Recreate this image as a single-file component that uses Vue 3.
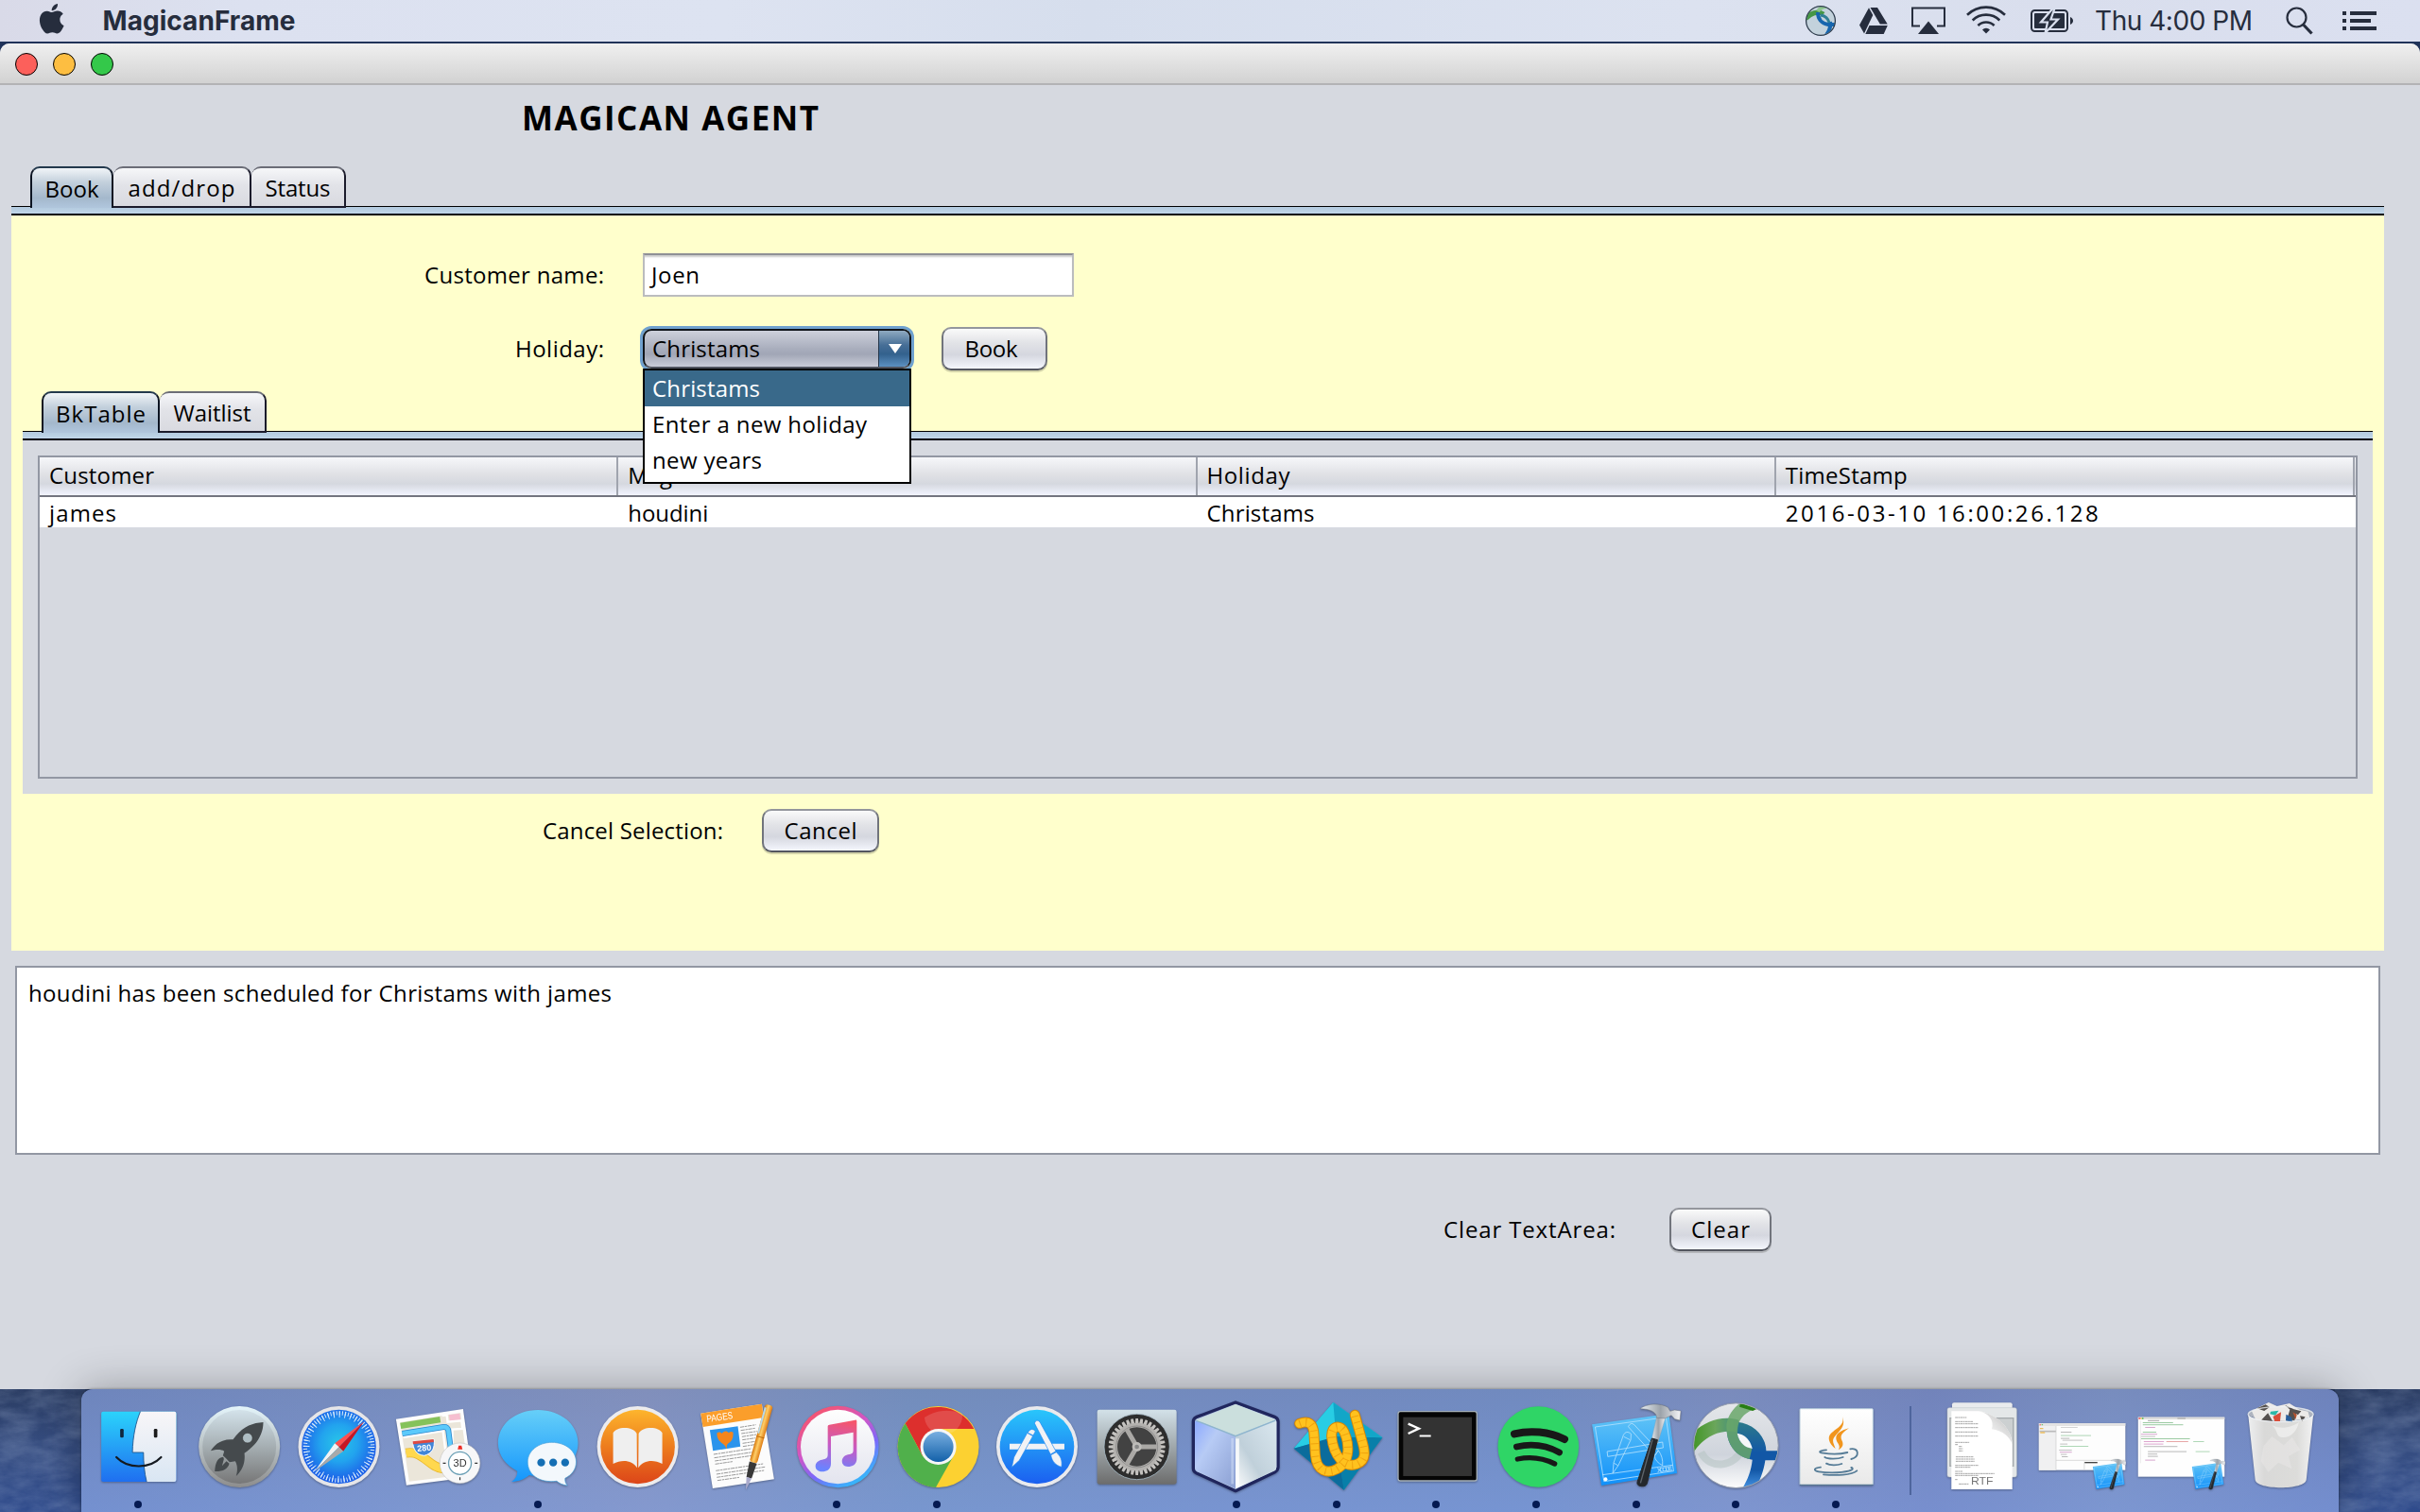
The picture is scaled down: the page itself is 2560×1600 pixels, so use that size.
<script setup>
// Spreads the letters of a label so that it takes the given width in pixels.
const vFit = {
  mounted(el, { value }) {
    const n = el.textContent.length
    const spacing = (value - el.getBoundingClientRect().width) / (n - 1)
    el.style.letterSpacing = `${spacing}px`
    el.style.marginRight = `${-spacing}px`
  },
}

const mainTabs = [
  { label: 'Book', fit: 57, width: 88, on: true },
  { label: 'add/drop', fit: 113, width: 146 },
  { label: 'Status', fit: 69, width: 100 },
]
const innerTabs = [
  { label: 'BkTable', fit: 95, width: 125, on: true },
  { label: 'Waitlist', fit: 82, width: 113 },
]
const holidays = [
  { label: 'Christams', fit: 114, on: true },
  { label: 'Enter a new holiday', fit: 227 },
  { label: 'new years', fit: 116 },
]
const columns = [
  { head: 'Customer', headFit: 111, cell: 'james', cellFit: 71 },
  { head: 'Magican', headFit: 90, cell: 'houdini', cellFit: 85 },
  { head: 'Holiday', headFit: 88, cell: 'Christams', cellFit: 114 },
  { head: 'TimeStamp', headFit: 129, cell: '2016-03-10 16:00:26.128', cellFit: 331 },
]
const gearTeeth = Array.from({ length: 36 }, (_, i) => i * 10)
const codeLines = [
  [745, 196, 90, '#3a9a4a'], [745, 203, 120, '#3a9a4a'], [752, 211, 30, '#b050a0'], [745, 226, 40, '#3a9a4a'],
  [740, 233, 48, '#b050a0'], [740, 240, 42, '#888'], [740, 247, 145, '#3a9a4a'], [748, 256, 60, '#c050a0'],
  [815, 256, 65, '#d05050'], [895, 256, 32, '#60b070'], [748, 264, 58, '#c050a0'], [748, 272, 100, '#777'],
  [760, 288, 115, '#777'], [902, 288, 42, '#60b070'], [760, 296, 28, '#777'], [760, 303, 30, '#777'], [752, 315, 30, '#b050a0'],
]
const editorLines = [
  [505, 211, 50, '#aaa'], [505, 226, 32, '#777'], [505, 237, 90, '#60b070'], [505, 246, 26, '#777'], [510, 252, 60, '#888'],
  [503, 264, 22, '#888'], [503, 271, 84, '#60b070'], [500, 283, 38, '#888'], [502, 290, 36, '#b050a0'], [505, 297, 18, '#888'],
  [508, 304, 18, '#777'],
]
</script>

<template>
  <div class="desktop">
    <svg class="wallpaper" width="2560" height="1600">
      <filter id="grain" x="0" y="0" width="100%" height="100%">
        <feTurbulence type="fractalNoise" baseFrequency=".03 .07" numOctaves="5" seed="4" />
        <feColorMatrix values="0 0 0 0 .45  0 0 0 0 .55  0 0 0 0 .75  1.1 0 0 0 -.3" />
      </filter>
      <rect y="1468" width="90" height="132" filter="url(#grain)" opacity=".4" />
      <rect x="2470" y="1468" width="90" height="132" filter="url(#grain)" opacity=".4" />
    </svg>

    <header class="menubar">
      <svg class="apple" viewBox="0 0 24 24"><path fill="#262d3d" d="M12.152 6.896c-.948 0-2.415-1.078-3.96-1.04-2.04.027-3.91 1.183-4.961 3.014-2.117 3.675-.546 9.103 1.519 12.09 1.013 1.454 2.208 3.09 3.792 3.039 1.52-.065 2.09-.987 3.935-.987 1.831 0 2.35.987 3.96.948 1.637-.026 2.676-1.48 3.676-2.948 1.156-1.688 1.636-3.325 1.662-3.415-.039-.013-3.182-1.221-3.22-4.857-.026-3.04 2.48-4.494 2.597-4.559-1.429-2.09-3.623-2.324-4.39-2.376-2-.156-3.675 1.09-4.61 1.09zM15.53 3.83c.843-1.012 1.4-2.427 1.245-3.83-1.207.052-2.662.805-3.532 1.818-.78.896-1.454 2.338-1.273 3.714 1.338.104 2.715-.688 3.559-1.701" /></svg>
      <b v-fit="204">MagicanFrame</b>
      <div class="status">
        <svg width="34" height="34" viewBox="0 0 34 34">
          <defs><clipPath id="ball"><circle cx="17" cy="17" r="15" /></clipPath></defs>
          <circle cx="17" cy="17" r="15" fill="#c3d2dc" />
          <g clip-path="url(#ball)" fill="none">
            <path d="M1 15C6 9 14 6 20 10" stroke="#469746" stroke-width="5" />
            <path d="M14 7c2-3 5-5 9-5" stroke="#8cc58c" stroke-width="4" />
            <path d="M14 8c0 7 4 12 11 13h8M27 18c1 6-1 10-4 14" stroke="#1766ae" stroke-width="4" />
            <path d="M17 11c6 1 8 4 9 8" stroke="#2f7f95" stroke-width="3" />
          </g>
          <circle cx="17" cy="17" r="15.4" fill="none" stroke="#2d3c4c" stroke-width="1.3" />
        </svg>
        <svg class="drive" width="30" height="28" viewBox="0 0 30 28" fill="#262d3d">
          <path d="M10 .2 14.3 8 5 27.600 0 18.500ZM11.500 0h7.500l10.700 17.500h-7.900ZM10.500 19h19.300L25.700 28H6.300Z" />
        </svg>
        <svg class="airplay" width="36" height="30" viewBox="0 0 36 30">
          <path d="M9 20.500H1V1.500h34v19h-8" fill="none" stroke="#262d3d" stroke-width="2" /><path d="M18 15.500 29 29H7Z" fill="#262d3d" />
        </svg>
        <svg class="wifi" width="42" height="30" viewBox="0 0 42 30" fill="none" stroke="#262d3d" stroke-width="2.600">
          <path d="M1 9.800a28.500 28.500 0 0 1 40 0M6.700 15.500a20.400 20.400 0 0 1 28.600 0M12.400 21a12.200 12.200 0 0 1 17.200 0" />
          <path d="M21 29.500l-4-4a5.700 5.700 0 0 1 8 0Z" fill="#262d3d" stroke="none" />
        </svg>
        <svg class="battery" width="46" height="26" viewBox="0 0 46 26">
          <rect x="1" y="2" width="38" height="22" rx="3.500" fill="none" stroke="#262d3d" stroke-width="2" />
          <rect x="4" y="5" width="32" height="16" rx="1" fill="#262d3d" />
          <path d="M42 9c4 1.500 4 6.500 0 8Z" fill="#262d3d" />
          <path d="M23.500 0 11 14.500h7L15.500 26 29 11.500h-7.500L25.500 0Z" fill="#262d3d" stroke="#dae0ef" stroke-width="2.200" />
        </svg>
        <span class="clock" v-fit="167">Thu 4:00 PM</span>
        <svg class="search" width="29" height="30" viewBox="0 0 29 30" fill="none" stroke="#262d3d">
          <circle cx="11.500" cy="11.500" r="10" stroke-width="2.200" /><path d="m18.500 19 9 9.500" stroke-width="3.200" />
        </svg>
        <svg class="list" width="36" height="20" viewBox="0 0 36 20" fill="#262d3d">
          <path d="M0 0h4v4H0ZM8 0h28v4H8ZM0 8h4v4H0ZM8 8h22v4H8ZM0 16h4v4H0ZM8 16h28v4H8Z" />
        </svg>
      </div>
    </header>

    <section class="window">
      <div class="titlebar"><i class="red" /><i class="amber" /><i class="green" /></div>
      <h1><span v-fit="314">MAGICAN AGENT</span></h1>

      <div class="pane">
        <nav class="tabs">
          <div v-for="t in mainTabs" :key="t.label" class="tab" :class="{ on: t.on }" :style="{ width: t.width + 'px' }">
            <span v-fit="t.fit">{{ t.label }}</span>
          </div>
        </nav>
        <div class="rail" />
        <main class="booking">
          <div class="row">
            <label><span v-fit="190">Customer name:</span></label>
            <div class="field"><span v-fit="51">Joen</span></div>
          </div>
          <div class="row second">
            <label><span v-fit="94">Holiday:</span></label>
            <div class="combo">
              <div class="value"><span v-fit="114">Christams</span></div>
              <div class="arrow"><svg width="14" height="10" viewBox="0 0 14 10"><path d="M0 0h14L7 10Z" fill="#fff" /></svg></div>
              <ul class="popup">
                <li v-for="h in holidays" :key="h.label" :class="{ on: h.on }"><span v-fit="h.fit">{{ h.label }}</span></li>
              </ul>
            </div>
            <button class="book"><span v-fit="56">Book</span></button>
          </div>

          <div class="inner">
            <nav class="tabs">
              <div v-for="t in innerTabs" :key="t.label" class="tab" :class="{ on: t.on }" :style="{ width: t.width + 'px' }">
                <span v-fit="t.fit">{{ t.label }}</span>
              </div>
            </nav>
            <div class="rail" />
            <div class="tablebox">
              <div class="table">
                <div class="head">
                  <div v-for="c in columns" :key="c.head"><span v-fit="c.headFit">{{ c.head }}</span></div>
                </div>
                <div class="record">
                  <div v-for="c in columns" :key="c.head"><span v-fit="c.cellFit">{{ c.cell }}</span></div>
                </div>
              </div>
            </div>
          </div>

          <div class="row cancelrow">
            <label><span v-fit="191">Cancel Selection:</span></label>
            <button class="cancel"><span v-fit="77">Cancel</span></button>
          </div>
        </main>
      </div>

      <div class="log"><span v-fit="617">houdini has been scheduled for Christams with james</span></div>
      <div class="row clearrow">
        <label><span v-fit="182">Clear TextArea:</span></label>
        <button class="clear"><span v-fit="62">Clear</span></button>
      </div>
    </section>

    <footer class="dock">
      <!-- Finder -->
      <div class="slot run"><svg viewBox="282.600 90 317 390">
        <defs>
          <linearGradient id="fb" x2="0" y2="1"><stop stop-color="#2bd3fb" /><stop offset="1" stop-color="#1f6ff0" /></linearGradient>
          <linearGradient id="fw" x2="0" y2="1"><stop stop-color="#f8f6f8" /><stop offset="1" stop-color="#d9e6f3" /></linearGradient>
        </defs>
        <rect x="322" y="161" width="238" height="223" rx="6" fill="url(#fb)" />
        <path d="M446 161c-14 34-24 78-25 130h35c0 34 3 64 10 93h88q6 0 6-6V167q0-6-6-6Z" fill="url(#fw)" />
        <path d="M446 161c-14 34-24 78-25 130h35c0 34 3 64 10 93" fill="none" stroke="#1b4f86" stroke-width="2.500" />
        <rect x="382" y="216" width="11" height="28" rx="4" fill="#10263c" /><rect x="489" y="216" width="11" height="28" rx="4" fill="#1b1b1b" />
        <path d="M370 306c36 38 106 38 142 0" fill="none" stroke="#14191f" stroke-width="6.500" stroke-linecap="round" />
      </svg></div>
      <!-- Launchpad -->
      <div class="slot"><svg viewBox="599.400 90 317 390">
        <defs>
          <linearGradient id="lp" x2="0" y2="1"><stop stop-color="#d3e2ea" /><stop offset=".5" stop-color="#a5aeb2" /><stop offset="1" stop-color="#777" /></linearGradient>
          <linearGradient id="lr" x2="0" y2="1"><stop stop-color="#e4f5fb" /><stop offset="1" stop-color="#8d8d8d" /></linearGradient>
        </defs>
        <circle cx="759" cy="273" r="129" fill="url(#lr)" /><circle cx="759" cy="273" r="117" fill="url(#lp)" />
        <path fill="#454a4d" d="M835 195c-38 2-70 17-96 55-30-2-54 9-71 36 19-5 32-5 43 1l-4 14 9 8 12 13 18-3c6 11 9 24 3 47 19-18 30-42 26-73 38-25 60-58 60-98Z" />
        <path fill="#454a4d" d="M708 305c-17 2-26 17-27 46 25 1 42-8 46-25l-9-7-14 15 6-22Z" /><circle cx="785" cy="245" r="16" fill="#aebdc3" stroke="#333" stroke-width="2" />
      </svg></div>
      <!-- Safari -->
      <div class="slot"><svg viewBox="916.500 90 317 390">
        <defs><radialGradient id="sf" cy=".45"><stop stop-color="#28c6e8" /><stop offset=".5" stop-color="#22a3ee" /><stop offset="1" stop-color="#1d62e8" /></radialGradient></defs>
        <circle cx="1077" cy="273" r="129" fill="#e5e5e8" /><circle cx="1077" cy="273" r="118" fill="url(#sf)" />
        <circle cx="1077" cy="273" r="107" fill="none" stroke="#d9ecfa" stroke-width="13" stroke-dasharray="3 6.340" />
        <circle cx="1077" cy="273" r="103" fill="none" stroke="#d9ecfa" stroke-width="20" stroke-dasharray="3 14.970" />
        <path d="M1157 193l-93 69 13 12Z" fill="#ff4f4f" /><path d="M1157 193l-66 94-14-13Z" fill="#c81522" />
        <path d="M1000 351l64-89 13 12Z" fill="#f3f3f3" /><path d="M1000 351l91-64-14-13Z" fill="#a9a9a9" />
      </svg></div>
      <!-- Maps -->
      <div class="slot"><svg viewBox="1233.300 90 317 390">
        <path d="M1257 185 1470 153 1500 368 1290 395Z" fill="#fdfdfd" />
        <path d="M1270 195 1462 165 1488 360 1299 383Z" fill="#ebe6da" />
        <path d="M1270 197 1396 177 1399 196 1273 216Z" fill="#85c25a" /><path d="M1425 172 1459 167 1462 188 1428 192Z" fill="#f6bfd0" />
        <path d="M1403 174 1418 172 1421 194 1465 190 1468 216 1436 218V270M1280 243 1406 222 1414 285" fill="none" stroke="#fff" stroke-width="7" />
        <path d="M1277 231 1408 210q12-1 15 10l8 60" fill="none" stroke="#2a87cf" stroke-width="18" /><path d="M1277 231 1408 210q12-1 15 10l8 60" fill="none" stroke="#5ccafb" stroke-width="13" />
        <path d="M1289 293c55-10 70 45 118 50" fill="none" stroke="#eab72c" stroke-width="30" /><path d="M1289 293c55-10 70 45 118 50" fill="none" stroke="#ffd84e" stroke-width="25" />
        <path d="M1310 256l68-7c3 29-6 45-31 52-27-2-36-22-37-45Z" fill="#4286d8" stroke="#fff" stroke-width="3" /><path d="M1310 256l66-7 1 9-66 7Z" fill="#df4a42" />
        <text x="1347" y="286" class="t" font-size="27" font-weight="700" fill="#fff" text-anchor="middle" transform="rotate(-5 1347 280)">280</text>
        <circle cx="1460" cy="325" r="64" fill="#f7f7f8" stroke="#bbb" stroke-width="1.500" /><circle cx="1460" cy="325" r="36" fill="#fff" stroke="#6a9fb5" stroke-width="4" />
        <text x="1460" y="336" class="t" font-size="33" fill="#333" text-anchor="middle">3D</text>
        <path d="M1453 281l3-12h9l3 12Z" fill="#ed2b24" /><path d="M1406 325h9M1507 325h9M1460 370v9" stroke="#333" stroke-width="3.500" />
      </svg></div>
      <!-- Messages -->
      <div class="slot run"><svg viewBox="50.400 90 317 390">
        <defs><linearGradient id="ms" x2="0" y2="1"><stop stop-color="#66cff8" /><stop offset="1" stop-color="#1596fc" /></linearGradient></defs>
        <path d="M207 156c72 0 127 46 127 105s-55 105-127 105c-9 0-20-1-28-3-15 13-32 20-56 21 13-10 19-20 18-34-36-19-61-49-61-89 0-59 55-105 127-105Z" fill="url(#ms)" />
        <path d="M251 259c43 0 77 27 77 62 0 24-14 41-35 52-1 9 1 15 7 23-16-2-26-7-34-14-57 7-92-22-92-61 0-35 34-62 77-62Z" fill="#f3f8fc" stroke="#3e9bd8" stroke-width="2" />
        <circle cx="217" cy="323" r="12.500" fill="#156fb4" /><circle cx="255" cy="323" r="12.500" fill="#156fb4" /><circle cx="293" cy="323" r="12.500" fill="#156fb4" />
      </svg></div>
      <!-- iBooks -->
      <div class="slot"><svg viewBox="367.200 90 317 390">
        <defs><linearGradient id="ib" x2="0" y2="1"><stop stop-color="#fdb52d" /><stop offset=".5" stop-color="#ed7c1d" /><stop offset="1" stop-color="#dc4519" /></linearGradient></defs>
        <circle cx="525" cy="273" r="129" fill="#ececee" /><circle cx="525" cy="273" r="118" fill="url(#ib)" />
        <path fill="#efefef" d="M523 340c-16-25-48-27-76-13V229c8-20 62-24 75 2ZM527 340c16-25 48-27 76-13V229c-8-20-62-24-75 2Z" />
      </svg></div>
      <!-- Pages -->
      <div class="slot"><svg viewBox="684.300 90 317 390">
        <defs><linearGradient id="pen"><stop stop-color="#d8770b" /><stop offset=".45" stop-color="#ffcf6a" /><stop offset="1" stop-color="#df7b12" /></linearGradient></defs>
        <path d="M724 167 918 137 957 376 762 405Z" fill="#fcfcfc" /><path d="M724 167 918 137 924 180 731 210Z" fill="#fb9e2b" />
        <text x="744" y="195" class="t" font-size="31" fill="#fff" textLength="84" lengthAdjust="spacingAndGlyphs" transform="rotate(-8 744 195)">PAGES</text>
        <path d="M753 220 842 208 850 272 763 286Z" fill="#2b94ec" />
        <path d="M805 279c-3-8-4-10-9-14-12-8-22-20-20-36 6-4 12-2 15 2 6-9 16-10 22-2 4-5 9-5 14-2 1 16-3 28-15 35-5 4-6 9-5 16Z" fill="#f5851c" />
        <path d="M849 211l50-8M851 221l46-7M853 231l50-7M855 241l46-7M856 251l42-6M857 262l40-6M858 272l38-6M765 297l120-18M767 308l122-18M769 318l117-17M770 328l55-8M772 349l150-22M774 360l154-23M775 370l150-22M777 380l70-10" stroke="#9a9a9a" stroke-width="3" stroke-dasharray="13 2 7 2" />
        <g transform="rotate(15.500 905 270)"><rect x="893" y="135" width="25" height="190" rx="9" fill="url(#pen)" /><rect x="893" y="146" width="6" height="85" fill="#b9d9e8" /><path d="M893 325h24l-3 50h-17Z" fill="#383838" /><path d="M897 375h17l-8 39Z" fill="#aac" /><path d="M893 241h25" stroke="#b96508" stroke-width="3" /></g>
      </svg></div>
      <!-- iTunes -->
      <div class="slot run"><svg viewBox="1000 90 317 390">
        <defs>
          <linearGradient id="it" x1=".2" y1="0" x2=".8" y2="1"><stop stop-color="#fd5560" /><stop offset=".4" stop-color="#cf56c9" /><stop offset=".65" stop-color="#7a69fa" /><stop offset="1" stop-color="#22ccfb" /></linearGradient>
          <linearGradient id="nt" gradientUnits="userSpaceOnUse" x1="1180" y1="190" x2="1150" y2="350"><stop stop-color="#f5566b" /><stop offset=".5" stop-color="#c75ac4" /><stop offset="1" stop-color="#6a83ff" /></linearGradient>
          <linearGradient id="iw" x2="0" y2="1"><stop stop-color="#fefefe" /><stop offset="1" stop-color="#e3e4ee" /></linearGradient>
        </defs>
        <circle cx="1160" cy="273" r="130" fill="url(#it)" /><circle cx="1160" cy="273" r="118" fill="url(#iw)" />
        <path fill="url(#nt)" d="M1128 208q0-4 5-5l82-15q5-1 5 4v119c0 18-14 25-28 25-25 0-25-33 0-38 13-3 17-3 17-16v-55l-71 13v87c0 18-14 25-28 25-28 0-28-34 0-38 13-2 18-5 18-16Z" />
      </svg></div>
      <!-- Chrome -->
      <div class="slot run"><svg viewBox="1318.200 90 317 390">
        <defs><linearGradient id="cb" x2="0" y2="1"><stop stop-color="#78aee0" /><stop offset="1" stop-color="#1361a9" /></linearGradient></defs>
        <circle cx="1479" cy="273" r="129" fill="#fcd131" />
        <path d="M1374 199a129 129 0 0 1 218 17H1479l-50 86Z" fill="#dd2f2d" /><path d="M1374 199a129 129 0 0 0 97 203l57-101-49 28-50-27Z" fill="#50b04b" />
        <path d="M1435 180a129 129 0 0 1 120-12 60 60 0 0 1-120 12Z" fill="#fff" opacity=".14" />
        <circle cx="1479" cy="273" r="57" fill="#f6f6f6" /><circle cx="1479" cy="273" r="48" fill="url(#cb)" />
      </svg></div>
      <!-- App Store -->
      <div class="slot"><svg viewBox="135 90 317 390">
        <defs><linearGradient id="as" x2="0" y2="1"><stop stop-color="#29c6fb" /><stop offset="1" stop-color="#1b5ff0" /></linearGradient></defs>
        <circle cx="291" cy="273" r="129" fill="#e9eaee" /><circle cx="291" cy="273" r="118" fill="url(#as)" />
        <g fill="#f1f2f5"><path d="M204 263h174v18H204Z" /><g stroke="#2087ee" stroke-width="2"><path d="M283 198q6-15 17-4l51 93-17 10Z" /><path d="M335 299l17-9c16 14 19 27 17 47-18-5-30-16-34-38Z" /><path d="M260 229l18 10-43 77-24 22 7-32Z" /><path d="M262 227q12-18 24-3l-7 13-18-9Z" /></g></g>
      </svg></div>
      <!-- System Preferences -->
      <div class="slot"><svg viewBox="451 90 317 390">
        <defs><linearGradient id="sp" x2="0" y2="1"><stop stop-color="#d3e2e9" /><stop offset="1" stop-color="#6c6c6c" /></linearGradient></defs>
        <rect x="483" y="155" width="252" height="237" rx="7" fill="url(#sp)" /><circle cx="609" cy="273" r="104" fill="#2d2d2d" stroke="#a6b8c3" stroke-width="2.500" />
        <g fill="#c4c2bf"><path v-for="a in gearTeeth" :key="a" d="M605 183h8l2 18h-12Z" :transform="`rotate(${a} 609 273)`" /></g>
        <circle cx="609" cy="273" r="69" fill="#424242" stroke="#b3b1ae" stroke-width="14" /><circle cx="609" cy="273" r="66" fill="none" stroke="#777" stroke-width="2" />
        <path d="M609 273h65M609 273l-33-57M609 273l-33 57" stroke="#aaa8a5" stroke-width="15" /><circle cx="609" cy="273" r="15" fill="#bebcb9" /><circle cx="609" cy="273" r="7" fill="#878787" />
      </svg></div>
      <!-- NetBeans -->
      <div class="slot run"><svg viewBox="768.900 90 317 390">
        <defs>
          <linearGradient id="nl" x1="0" y1="0" x2="1" y2="1"><stop stop-color="#8ca9ff" /><stop offset=".35" stop-color="#b7cbf5" /><stop offset="1" stop-color="#8b9fd2" /></linearGradient>
          <linearGradient id="nr" x1="0" y1="1" x2="1" y2="0"><stop stop-color="#fff" /><stop offset=".4" stop-color="#c0d0da" /><stop offset="1" stop-color="#dae7ef" /></linearGradient>
        </defs>
        <path d="M922 132 1048 179q9 4 9 14v144q0 11-10 16l-125 60-125-57q-9-5-9-15V193q0-10 9-14Z" fill="#b3c5e3" stroke="#20265d" stroke-width="10" stroke-linejoin="round" />
        <path d="M922 238 797 190q-4 2-4 8v140q0 8 6 12l123 56Z" fill="url(#nl)" /><path d="M922 238 1050 189q2 2 2 8v140q0 8-5 12l-125 57Z" fill="url(#nr)" />
        <path d="M922 138 1049 187 922 238 797 188Z" fill="#cbdfdd" /><path d="M797 190l125 49 127-50" fill="none" stroke="#8eb5cd" stroke-width="4" /><path d="M928 247v148" stroke="#fff" stroke-width="11" opacity=".8" /><path d="M912 246v145" stroke="#dce8fc" stroke-width="8" opacity=".45" />
      </svg></div>
      <!-- Rope diamond -->
      <div class="slot run"><svg viewBox="1086 90 317 390">
        <path d="M1231 132 1387 244 1265 410 1106 278Z" fill="#1197bd" /><path d="M1231 132 1387 244 1240 242 1106 278Z" fill="#28cde4" /><path d="M1240 240 1387 244 1265 410Z" fill="#087fa9" /><path d="M1106 278 1240 240 1265 410Z" fill="#0b6c9c" /><path d="M1231 132 1240 240 1387 244Z" fill="#12a6c8" />
        <g fill="none" stroke-linecap="round" stroke-linejoin="round">
          <path d="M1124 199c28-11 44 0 46 34l4 64c4 56 40 62 68 47 48-25 38-86 24-118-10-24-42-22-40 14 6 62 40 102 80 88 32-12 26-42 16-76l-22-80" stroke="#d88705" stroke-width="33" />
          <path d="M1124 199c28-11 44 0 46 34l4 64c4 56 40 62 68 47 48-25 38-86 24-118-10-24-42-22-40 14 6 62 40 102 80 88 32-12 26-42 16-76l-22-80" stroke="#ffc21e" stroke-width="27" />
          <path d="M1124 199c28-11 44 0 46 34l4 64c4 56 40 62 68 47 48-25 38-86 24-118-10-24-42-22-40 14 6 62 40 102 80 88 32-12 26-42 16-76l-22-80" stroke="#f0a30f" stroke-width="24" stroke-dasharray="3 17" stroke-linecap="butt" />
        </g>
      </svg></div>
      <!-- Terminal -->
      <div class="slot run"><svg viewBox="1402 90 317 390">
        <rect x="1438" y="161" width="250" height="220" rx="7" fill="#050505" stroke="#a5b0b8" stroke-width="4" /><rect x="1454" y="179" width="218" height="187" fill="#333" />
        <path d="M1470 200l34 15-34 16" fill="none" stroke="#fff" stroke-width="7" /><path d="M1506 238.500h36" stroke="#fff" stroke-width="6" />
      </svg></div>
      <!-- Spotify -->
      <div class="slot run"><svg viewBox="219 90 317 390">
        <circle cx="382" cy="273" r="128.500" fill="#2fd566" />
        <g fill="none" stroke="#181818" stroke-linecap="round"><path d="M306 232c50-12 110-8 159 17" stroke-width="24" /><path d="M313 273c48-11 92-6 136 18" stroke-width="20" /><path d="M316 312c40-8 80-4 118 15" stroke-width="16" /></g>
      </svg></div>
      <!-- Xcode -->
      <div class="slot run"><svg viewBox="536.700 90 317 390">
        <defs>
          <linearGradient id="xb" x2="0" y2="1"><stop stop-color="#62c5f6" /><stop offset="1" stop-color="#1090fa" /></linearGradient>
          <linearGradient id="xm" x2="1"><stop stop-color="#e9f0f5" /><stop offset=".5" stop-color="#9ca3aa" /><stop offset="1" stop-color="#f5f5f7" /></linearGradient>
          <g id="xcode">
            <path d="M552 202 796 168 822 357 582 396Z" fill="url(#xb)" />
            <g fill="none" stroke="#b5e1fc" stroke-width="2.500"><path d="M562 210 787 179 811 350 590 383ZM585 362 808 331M600 288 776 258 778 276 602 304ZM667 209q8-16 19-6l77 82-13 17ZM750 302l13-17q15 20 13 47-22-10-26-30M652 235q9-16 24-3l-1 19-40 82-17 24 3-34ZM653 241l20 10M621 324l14 9" /></g>
            <circle cx="595" cy="376" r="6" fill="#fff" />
            <path d="M757 180l28 1-24 79-21-4Z" fill="url(#xm)" stroke="#8c959d" stroke-width="1" /><path d="M742 246l18 5-33 138q-4 11-19 9t-12-14Z" fill="#24282c" stroke="#24282c" stroke-width="3" /><path d="M744 250l-38 138" stroke="#60676e" stroke-width="4" />
            <path d="M705 152c20-17 65-19 88-4l7 12 14-4 20 3-3 30-16-4-11-12-21 10-26-2c1-19-22-28-52-29Z" fill="url(#xm)" stroke="#6d747b" stroke-width="1.500" />
          </g>
        </defs>
        <use href="#xcode" /><text x="760" y="354" class="t" font-size="19" fill="none" stroke="#b5e1fc" textLength="47" transform="rotate(-7 760 354)">XCODE</text>
      </svg></div>
      <!-- VPN client -->
      <div class="slot run"><svg viewBox="853.800 90 317 390">
        <defs>
          <clipPath id="vc"><circle cx="1011" cy="269" r="134" /></clipPath>
          <linearGradient id="vg" x2="0" y2="1"><stop stop-color="#e5e7ea" /><stop offset=".6" stop-color="#cfd4dc" /><stop offset="1" stop-color="#fff" /></linearGradient>
          <linearGradient id="vn"><stop stop-color="#3f9421" /><stop offset=".5" stop-color="#6ba65b" /><stop offset="1" stop-color="#3c8b84" /></linearGradient>
          <linearGradient id="vb" x2="0" y2="1"><stop stop-color="#2c7a8a" /><stop offset=".45" stop-color="#1257a6" /><stop offset=".7" stop-color="#1257a6" /><stop offset="1" stop-color="#4a98e8" /></linearGradient>
        </defs>
        <g clip-path="url(#vc)">
          <rect x="870" y="130" width="280" height="280" fill="url(#vg)" />
          <path d="M900 290c30 60 110 45 130-10" fill="none" stroke="#b7c4c4" stroke-width="24" opacity=".6" />
          <path d="M1016 194c52 6 90 45 91 92h43v30h-46c-6 40-20 72-35 95h-42c20-29 32-60 36-97-48-6-80-45-81-93Z" fill="url(#vb)" />
          <path d="M870 232c42-40 96-60 150-44l-4 39c-6-2-12-3-22-3-50-2-96 26-124 78Z" fill="url(#vn)" />
          <path d="M981 200c6-28 22-50 44-67l50 18c-32 12-50 28-58 56-3 12-2 20-1 26 3 22 20 40 46 45l-8 34c-52-10-76-58-73-112Z" fill="#6aa76a" opacity=".85" />
          <path d="M1015 230c5 28 22 45 48 49-6-25-20-44-48-49Z" fill="#f5f7f9" />
          <path d="M1025 134l52 19-13 6-42-13Z" fill="#277e13" />
        </g>
        <circle cx="1011" cy="269" r="134.500" fill="none" stroke="#99a1b1" stroke-width="3" />
      </svg></div>
      <!-- Java -->
      <div class="slot run"><svg viewBox="1171 90 317 390">
        <defs><linearGradient id="jb" x2="0" y2="1"><stop stop-color="#fff" /><stop offset="1" stop-color="#e9e9e9" /></linearGradient></defs>
        <rect x="1213" y="152" width="232" height="242" rx="3" fill="url(#jb)" stroke="#b4cbdc" stroke-width="3" /><path d="M1213 394h232" stroke="#476885" stroke-width="3" />
        <path d="M1348 177c12 38-50 42-42 75 2 10 10 19 20 27-6-19-13-24-2-39 14-18 36-31 24-63ZM1369 214c-32 8-45 22-40 38 3 12 14 14 7 31 15-10 16-20 10-31-7-15 3-24 23-38Z" fill="#f1951d" />
        <g fill="none" stroke="#557b96" stroke-width="5.500" stroke-linecap="round"><path d="M1297 283c-22 2-28 8-10 10 24 4 58 3 77-2M1373 280c28-5 31 24 3 32M1292 306c10 7 42 6 58 0M1297 326c12 7 35 6 49 1M1279 338c-22 2-25 11-6 14 38 6 84 3 103-5 8-4 4-7 0-8M1288 361c40 4 90 2 106-12" /></g>
      </svg></div>

      <div class="divider" />
      <!-- Document stack -->
      <div class="slot"><svg viewBox="123 90 296.800 390" preserveAspectRatio="none">
        <defs><linearGradient id="curl" x1="0" y1="1" x2="1" y2="0"><stop offset=".2" stop-color="#fff" /><stop offset=".6" stop-color="#ddd" /><stop offset="1" stop-color="#aaa" /></linearGradient></defs>
        <rect x="182" y="133" width="179" height="40" rx="6" fill="#e9ebed" /><rect x="168" y="149" width="206" height="220" rx="6" fill="#e4e7e8" stroke="#bfc4cb" stroke-width="1.500" /><rect x="176" y="182" width="188" height="152" fill="#ccd0d1" stroke="#a6abad" stroke-width="4" />
        <path d="M180 160h80c42 2 100 50 101 105v143H180Z" fill="#fff" /><path d="M260 160c42 5 98 44 101 105-8-25-30-43-61-48 8-26-8-52-40-57Z" fill="url(#curl)" />
        <path d="M191 180h34M191 193h54M191 200h68M191 212h68M191 226h66M191 239h68M191 259h42M191 266h9M202 272h10M202 279h12M202 286h12M193 305h52M193 312h56M193 319h56M191 332h70M191 338h46M191 351h22M191 358h117M191 364h70M191 377h7M202 391h30" stroke="#999" stroke-width="2.500" stroke-dasharray="8 1 5 1" />
        <text x="238" y="393" class="t" font-size="35" fill="#777" textLength="66" lengthAdjust="spacingAndGlyphs">RTF</text>
      </svg></div>
      <!-- Minimised editor windows -->
      <div class="slot"><svg viewBox="418 90 296.800 390" preserveAspectRatio="none">
        <rect x="440" y="198" width="257" height="149" fill="#fdfdfd" /><rect x="440" y="198" width="257" height="9" fill="#e3e3e3" /><rect x="440" y="207" width="51" height="140" fill="#f0f0f1" /><path d="M442 224h49" stroke="#bbb" stroke-width="5" /><path d="M443 215h10M444 228h14" stroke="#edbd60" stroke-width="4" /><path d="M491 207v140M491 316h206M575 320v27" stroke="#ccc" stroke-width="2" />
        <path d="M442 203h4" stroke="#f55" stroke-width="3" /><path d="M448 203h4" stroke="#5b5" stroke-width="3" /><path d="M576 323h38" stroke="#444" stroke-width="4" />
        <rect v-for="(l, i) in editorLines" :key="i" :x="l[0]" :y="l[1] - 1" :width="l[2]" height="2.500" :fill="l[3]" opacity=".6" />
        <use href="#xcode" transform="translate(407 261) scale(.35 .37)" />
      </svg></div>
      <div class="slot"><svg viewBox="712 90 296.800 390" preserveAspectRatio="none">
        <rect x="731" y="179" width="257" height="189" fill="#fefefe" /><rect x="731" y="179" width="257" height="7" fill="#dcdcdc" /><path d="M733 183h4" stroke="#f44" stroke-width="4" /><path d="M738 183h4" stroke="#fb4" stroke-width="4" /><path d="M743 183h4" stroke="#4b4" stroke-width="4" /><path d="M848 183h24M760 190h34" stroke="#999" stroke-width="2.500" /><path d="M738 190v135" stroke="#ddd" stroke-width="2" />
        <rect v-for="(l, i) in codeLines" :key="i" :x="l[0]" :y="l[1] - 1" :width="l[2]" height="2.500" :fill="l[3]" opacity=".6" />
        <use href="#xcode" transform="translate(698 261) scale(.35 .37)" />
      </svg></div>
      <!-- Trash -->
      <div class="slot"><svg viewBox="1008 90 296.800 390" preserveAspectRatio="none">
        <defs><linearGradient id="tr"><stop stop-color="#eeeff0" /><stop offset=".25" stop-color="#d9d9d8" /><stop offset=".75" stop-color="#dcdcda" /><stop offset="1" stop-color="#f2f2f3" /></linearGradient></defs>
        <ellipse cx="1156" cy="168" rx="97" ry="22" fill="#aeb4bf" />
        <path d="M1059 169c2 30 190 30 194 0l-21 208c-3 34-148 34-152 0Z" fill="url(#tr)" />
        <path d="M1070 160l20-12 30-16 25 12 15-4 22-5 30 20 25 6 5 20-60 11-100-3Z" fill="#eceae8" />
        <path d="M1085 151l26-12 12 8-16 12ZM1168 140l27 14 22 6-10 12-25-18ZM1098 188l20-22 14 26ZM1183 155l22 3-8 32-22-5ZM1213 175l16 3-10 14Z" fill="#55504e" /><path d="M1126 161l24-3-10 15-16-4Z" fill="#2ab8a8" /><path d="M1133 177l24-14-3 29h-16Z" fill="#d84d38" /><path d="M1172 170l16 9 3 15-20-4Z" fill="#295e9a" /><path d="M1192 163l12 8-4 15Z" fill="#b8532f" />
        <path d="M1105 270l25-30 35 28 25-25 24 40-35 20 10 40-40-20-30 30-22-35Z" fill="#f0efed" opacity=".35" /><path d="M1130 205c30 15 60 5 80-10-6 30-25 50-50 48-20-2-10-20-30-38Z" fill="#fff" opacity=".45" />
        <ellipse cx="1156" cy="170" rx="97" ry="24" fill="none" stroke="#eef1f5" stroke-width="4" opacity=".75" />
      </svg></div>
    </footer>
  </div>
</template>

<style>
body { overflow: hidden; background: #25406f; }
</style>

<style scoped>
.desktop { position: relative; width: 2560px; height: 1600px; overflow: hidden; display: flex; flex-direction: column; font: 24px/32px "Open Sans", "Noto Sans", sans-serif; color: #000; background: linear-gradient(#203359 0, #203359 1465px, #2a3c62 1470px, #364d80 1530px, #2f4b8c 1600px); }
.wallpaper { position: absolute; left: 0; top: 0; }
span, b { display: inline-block; white-space: pre; }
svg { display: block; flex: none; }
.menubar { position: relative; height: 44px; flex: none; display: flex; align-items: center; background: linear-gradient(90deg, #d9dae8 0, #dce1f0 10%, #dde3f1 30%, #d6deed 45%, #dce2f0 70%, #d9deed 85%, #dbe0f0); font: 28px/44px Inter, sans-serif; color: #262d3d; }
.apple { width: 31.500px; height: 31.500px; margin: -4px 38px 0 39px; }
.menubar b { font-weight: 700; }
.status { margin-left: auto; display: flex; align-items: center; padding-right: 46px; }
.drive { margin-left: 24px; }
.airplay { margin-left: 25px; }
.wifi { margin-left: 22px; margin-top: -2px; }
.battery { margin-left: 26px; }
.clock { margin-left: 22px; }
.search { margin-left: 35px; }
.list { margin-left: 31px; }

.window { position: relative; margin-top: 2px; height: 1424px; flex: none; display: flex; flex-direction: column; background: #d6d9e0; border-radius: 10px 10px 0 0; overflow: hidden; }
.titlebar { box-sizing: border-box; height: 44px; padding: 2px 0 0 16px; border-bottom: 2px solid #b3b3b5; background: linear-gradient(#f0f0f0, #d2d2d2); display: flex; align-items: center; gap: 16px; flex: none; }
.titlebar i { width: 24px; height: 24px; border-radius: 50%; box-sizing: border-box; border: 1px solid; }
.red { background: #fc605b; border-color: #df4744; }
.amber { background: #fdbe41; border-color: #de9f34; }
.green { background: #34c84a; border-color: #27aa35; }
h1 { margin: 0; height: 86px; flex: none; padding: 11px 0 0 552px; box-sizing: border-box; font-size: 35px; line-height: 48px; font-weight: 700; }

.pane { margin: 0 38px 0 12px; flex: none; }
.tabs { position: relative; z-index: 1; display: flex; height: 44px; margin-bottom: -2px; padding-left: 20px; }
.tab { box-sizing: border-box; display: flex; align-items: center; justify-content: center; height: 44px; padding-top: 2px; border: 2px solid #1b1b2b; border-top-color: #6b6d77; border-left: 0; border-radius: 10px 10px 0 0; background: linear-gradient(#f6f7f9, #e2e3e8 45%, #d9dae0); }
.tab.on { padding-top: 1px; border: 2px solid #0c1422; border-top-color: #23394d; border-bottom: 0; background: linear-gradient(#f1f5f8 0, #c3d0dc 35%, #a4b8cc 75%, #b0c6dd); }
.rail { height: 7px; border-top: 1px solid #000; border-bottom: 2px solid #00000f; background: linear-gradient(#b3cadf, #c0d6e8); }
.booking { box-sizing: border-box; height: 778px; padding-top: 40px; background: #ffffcc; }
.row { display: flex; align-items: center; height: 46px; }
.row label { box-sizing: border-box; width: 627px; text-align: right; margin-right: 41px; margin-top: -1px; }
.second { margin-top: 32px; }
.field { box-sizing: border-box; width: 456px; height: 46px; padding: 5px 7px; background: #fff; border: 2px solid #bbbcbe; border-top-color: #8f9096; box-shadow: inset 0 3px 2px -1px #ccc; }
.combo { position: relative; z-index: 3; box-sizing: border-box; width: 284px; height: 42px; display: flex; border: 2px solid #10151c; border-bottom-color: #50545f; border-radius: 9px; box-shadow: 0 0 0 3px #6fa1cf; background: linear-gradient(#cdd0db, #a9aebd 50%, #a1a6b6 65%, #c9ccd8); }
.value { flex: 1; line-height: 38px; padding-left: 8px; }
.arrow { width: 33px; box-sizing: border-box; padding-left: 1px; border-left: 1px solid #24364a; border-radius: 0 7px 7px 0; display: flex; align-items: center; justify-content: center; background: linear-gradient(#8faac1, #466e96 40%, #33618d 65%, #5b90c1); }
.popup { position: absolute; left: -2px; top: 40px; box-sizing: border-box; width: 284px; height: 122px; margin: 0; padding: 0; list-style: none; border: 2px solid #000; background: #fff; }
.popup li { height: 38px; line-height: 38px; padding-left: 8px; }
.popup .on { background: #39698a; color: #fff; }
button { box-sizing: border-box; height: 46px; padding: 0; border: 2px solid #71747c; border-top-color: #94969d; border-bottom-color: #53565f; border-radius: 10px; font: inherit; color: #000; background: linear-gradient(#fafafa, #e2e3e7 35%, #d5d7df 65%, #f4f6fd); box-shadow: 0 2px 0 rgba(60, 60, 50, .22); }
.book { width: 112px; margin-left: 32px; padding-right: 7px; }
.inner { margin: 22px 12px 0; }
.tablebox { box-sizing: border-box; height: 374px; padding: 16px; background: #d6d9e0; }
.table { box-sizing: border-box; height: 342px; border: 2px solid #9297a3; }
.head { display: flex; height: 40px; border-bottom: 2px solid #73757f; background: linear-gradient(#f6f7fa, #e0e1e5 45%, #d5d8df 70%, #f2f4ff); }
.head div { box-sizing: border-box; width: 612.250px; padding: 3px 0 0 10px; border-right: 2px solid #a0a4ae; }
.record { display: flex; height: 32px; background: #fff; }
.record div { box-sizing: border-box; width: 612.250px; padding-left: 10px; line-height: 34px; }
.cancelrow { margin-top: 16px; }
.cancelrow label { width: 753px; }
.cancel { width: 124px; }
.log { box-sizing: border-box; height: 200px; margin: 16px 42px 0 16px; padding: 11px 0 0 12px; border: 2px solid #9297a3; background: #fff; flex: none; }
.clearrow { margin-top: 56px; flex: none; }
.clearrow label { width: 1709px; margin-right: 57px; }
.clear { width: 108px; }

.dock { position: absolute; left: 86px; top: 1470px; box-sizing: border-box; width: 2388px; height: 130px; padding-left: 8px; display: flex; border-radius: 12px 12px 0 0; box-shadow: 0 0 45px rgba(0, 0, 0, .3), 0 0 3px rgba(0, 0, 0, .4); background: linear-gradient(rgba(112, 128, 170, .35), rgba(125, 155, 220, .45)), linear-gradient(90deg, #6d88c6, #7b92c7 14%, #8a97c4 25%, #7493c4 37%, #748fc8 50%, #718fca 64%, #7f91c5 73%, #7385c3 82%, #7c93c8 90%, #6c83c4); }
.slot { position: relative; width: 105.650px; height: 130px; flex: none; }
.slot svg { width: 100%; height: 130px; filter: drop-shadow(0 1px 1px rgba(0, 0, 0, .3)); }
.run::after { content: ""; position: absolute; left: 48px; top: 118px; width: 8px; height: 8px; border-radius: 50%; background: #051a52; }
.divider { width: 2px; height: 94px; margin: 18px 22px 0 24px; background: #4e659d; flex: none; }
.t { font-family: "Liberation Sans", sans-serif; }
</style>
